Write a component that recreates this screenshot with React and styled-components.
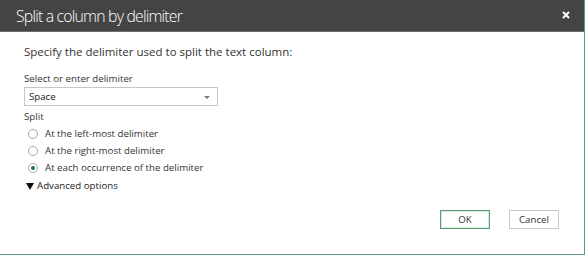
import React from "react";
import styled, { createGlobalStyle } from "styled-components";

const Global = createGlobalStyle`
  html, body { margin: 0; padding: 0; background: #ffffff; }
  body { font-family: "Open Sans", "Noto Sans", "Liberation Sans", sans-serif; }
`;

const Dialog = styled.div`
  box-sizing: border-box;
  width: 585px;
  height: 255px;
  display: flex;
  flex-direction: column;
  background: #ffffff;
  border-right: 1px solid #5f9c78;
  border-bottom: 1px solid #5f9c78;
`;

const TitleBar = styled.div`
  box-sizing: border-box;
  height: 32px;
  flex: none;
  display: flex;
  align-items: center;
  justify-content: space-between;
  padding: 0 14px 0 16px;
  background: #444444;
  border-bottom: 1px solid #6e6e6e;
`;

const Title = styled.div`
  color: #ffffff;
  font-size: 15.8px;
  font-weight: 300;
  letter-spacing: -0.8px;
  line-height: 24px;
  margin-top: 1px;
`;

const CloseButton = styled.button`
  border: 0;
  padding: 0;
  background: transparent;
  width: 8px;
  height: 8px;
  display: flex;
  margin-top: -2px;
  cursor: pointer;
`;

const Body = styled.div`
  flex: 1;
  display: flex;
  flex-direction: column;
  padding: 12px 0 0 24px;
  color: #333333;
  font-size: 9.7px;
`;

const Text = styled.div`
  line-height: 16px;
  font-size: ${(p) => p.$size || 9.7}px;
  margin-top: ${(p) => p.$mt || 0}px;
`;

const SelectBox = styled.div`
  box-sizing: border-box;
  width: 194px;
  height: 19px;
  border: 1px solid #c6c6c6;
  display: flex;
  align-items: center;
  justify-content: space-between;
  padding: 0 7px 0 4px;
  color: #222222;
`;

const Caret = styled.span`
  width: 0;
  height: 0;
  border-left: 3px solid transparent;
  border-right: 3px solid transparent;
  border-top: 3px solid #777777;
  margin-top: 1px;
`;

const RadioList = styled.div`
  display: flex;
  flex-direction: column;
`;

const RadioRow = styled.label`
  height: 17px;
  display: flex;
  align-items: center;
  gap: 7px;
  padding-left: 4px;
`;

const RadioCircle = styled.span`
  box-sizing: border-box;
  width: 10px;
  height: 10px;
  border-radius: 50%;
  border: 1px solid #a8a8a8;
  background: #ffffff;
  display: flex;
  align-items: center;
  justify-content: center;
  &::after {
    content: "";
    width: 4px;
    height: 4px;
    border-radius: 50%;
    background: ${(p) => (p.$checked ? "#217346" : "transparent")};
  }
`;

const Advanced = styled.div`
  display: flex;
  align-items: center;
  gap: 3px;
  line-height: 16px;
  margin-top: 2px;
  color: #222222;
`;

const Triangle = styled.span`
  width: 0;
  height: 0;
  margin-left: 2px;
  border-left: 4px solid transparent;
  border-right: 4px solid transparent;
  border-top: 7px solid #111111;
`;

const Footer = styled.div`
  display: flex;
  justify-content: flex-end;
  gap: 19px;
  padding: 0 25px 25px 0;
`;

const Button = styled.button`
  box-sizing: border-box;
  width: 50px;
  height: 19px;
  padding: 0;
  background: #ffffff;
  font-family: inherit;
  font-size: 9.7px;
  color: #333333;
  border: 1px solid ${(p) => (p.$primary ? "#5a9a72" : "#c8c8c8")};
  ${(p) => (p.$primary ? "box-shadow: inset 0 0 0 1px #d7eadf;" : "")}
`;

const options = [
  "At the left-most delimiter",
  "At the right-most delimiter",
  "At each occurrence of the delimiter",
];

export default function App() {
  return (
    <>
      <Global />
      <Dialog>
        <TitleBar>
          <Title>Split a column by delimiter</Title>
          <CloseButton aria-label="Close">
            <svg width="8" height="8" viewBox="0 0 8 8">
              <path d="M1 1L7 7M7 1L1 7" stroke="#ffffff" strokeWidth="2" />
            </svg>
          </CloseButton>
        </TitleBar>
        <Body>
          <Text $size={11.5}>Specify the delimiter used to split the text column:</Text>
          <Text $mt={11}>Select or enter delimiter</Text>
          <SelectBox>
            <span>Space</span>
            <Caret />
          </SelectBox>
          <Text $mt={3}>Split</Text>
          <RadioList>
            {options.map((o, i) => (
              <RadioRow key={o}>
                <RadioCircle $checked={i === 2} />
                <span>{o}</span>
              </RadioRow>
            ))}
          </RadioList>
          <Advanced>
            <Triangle />
            <span>Advanced options</span>
          </Advanced>
        </Body>
        <Footer>
          <Button $primary>OK</Button>
          <Button>Cancel</Button>
        </Footer>
      </Dialog>
    </>
  );
}
